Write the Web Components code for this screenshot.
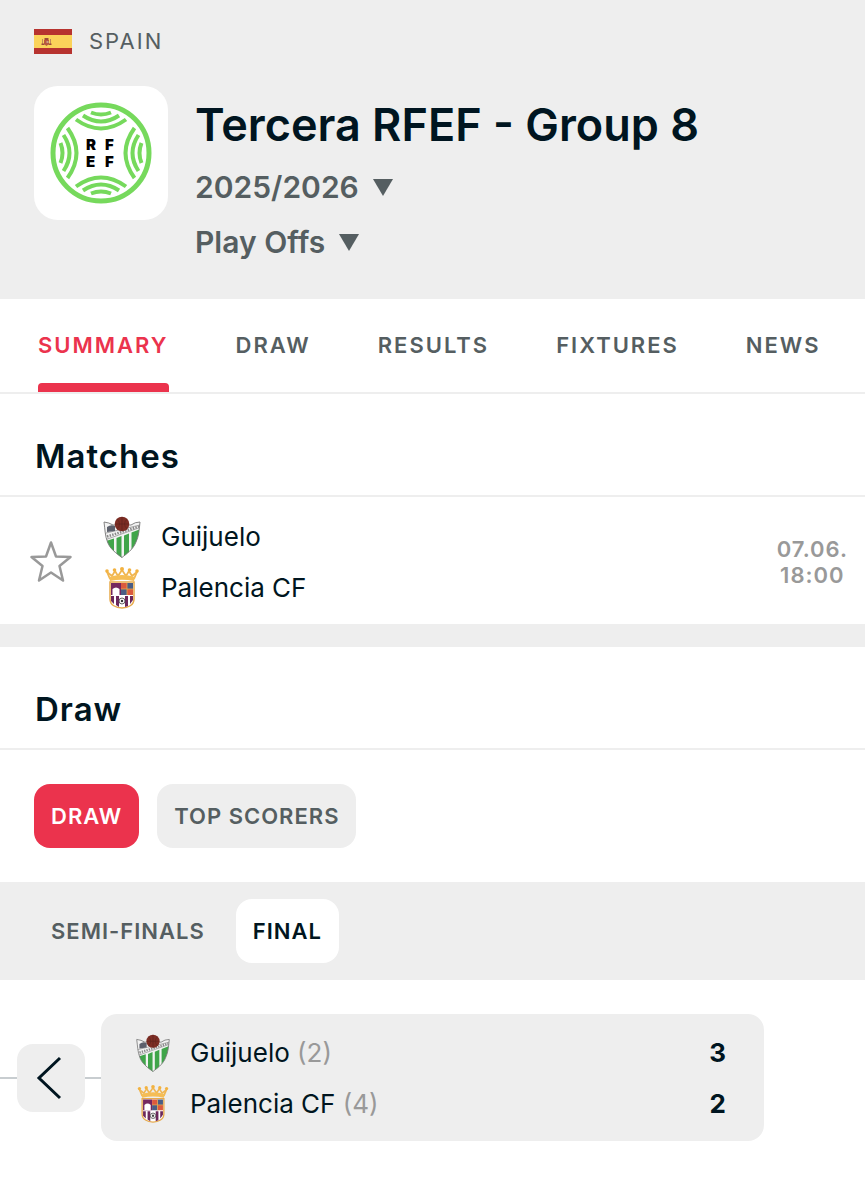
<!DOCTYPE html>
<html lang="en">
<head>
<meta charset="utf-8">
<meta name="viewport" content="width=device-width, initial-scale=1">
<title>Tercera RFEF - Group 8</title>
<style>
:root { --dark:#001520; --muted:#555e61; --faint:#999; --red:#eb334d; --grey:#eee; }
body { margin:0; background:#fff; color:var(--dark); font-family:Inter,"Liberation Sans",sans-serif; font-size:26px; }
</style>
</head>
<body>
<league-page></league-page>
<script>
const define = (name, html) => {
  const template = document.createElement('template');
  template.innerHTML = html;
  customElements.define(name, class extends HTMLElement {
    constructor() {
      super();
      this.attachShadow({ mode: 'open' }).append(template.content.cloneNode(true));
    }
  });
};

define('flag-spain', `
<style>:host{display:block;width:38px;height:25px}svg{display:block}</style>
<svg width="38" height="25" viewBox="0 0 38 25" aria-label="Spain">
  <path fill="#b7332f" d="M0 0h38v25H0z"/><path fill="#fbd35a" d="M0 6h38v13H0z"/>
  <path fill="#c08a5a" d="M8 10h1v6H8zM16 10h1v6h-1z"/><path fill="#b9583f" d="M10 11h5v4l-2.500 2-2.500-2z"/><path fill="#9d4a3a" d="M10.500 9h4v2h-4zM7.500 14.500h3V16h-3zM14.500 14.500h3V16h-3z"/>
  <path fill="#c9a08a" d="M12.500 12h2v2h-2z"/>
</svg>`);

define('league-logo', `
<style>:host{display:block;flex:none;width:134px;height:134px;border-radius:24px;background:#fff}svg{display:block}text{font:900 15px Inter,sans-serif}</style>
<svg width="134" height="134" viewBox="0 0 134 134" aria-label="RFEF">
  <defs><g id="arcs"><path d="M42 33.500Q67 51.500 92 33.500"/><path d="M49 29.500Q67 41.500 85 29.500"/><path d="M57 26.500Q67 30.500 77 26.500"/></g></defs>
  <g fill="none" stroke="#76d95c" stroke-width="4">
    <circle cx="67" cy="67" r="48" stroke-width="5"/>
    <use href="#arcs"/><use href="#arcs" transform="rotate(90 67 67)"/><use href="#arcs" transform="rotate(180 67 67)"/><use href="#arcs" transform="rotate(270 67 67)"/>
  </g>
  <text x="52 71" y="64">RF</text><text x="52 71" y="81">EF</text>
</svg>`);

define('crest-guijuelo', `
<style>:host{display:block;width:var(--crest,42px);height:var(--crest,42px)}svg{display:block;width:100%;height:100%}</style>
<svg viewBox="0 0 42 42" aria-hidden="true">
  <defs><clipPath id="shield"><path d="M3 6q5 .5 9 3h18q4-3 9-3c-.8 7-1 14-4 20-3 8-10 12-14 16C15 37 9 33 6.500 26 4 20 4 13 3 6z"/></clipPath></defs>
  <g clip-path="url(#shield)">
    <path fill="#f3f3f3" d="M0 0h42v42H0z"/>
    <path fill="#40a54a" d="M5 25l8-2.500V42H5zM15.500 22l5-2v22h-5zM23 19.500l5-2V42h-5zM30.500 16.500l9-3.500v29h-9z"/>
    <path fill="none" stroke="#888" stroke-width=".7" d="M3 17.500L39 9M5 23.500l34-12"/>
    <path fill="none" stroke="#8a8a8a" stroke-width="2.500" stroke-dasharray="1.500 1.200" d="M6 20.500l32-10"/>
    <path fill="#5c606c" d="M6 14v-3q4-3 8-1v5l-8 1z"/>
  </g>
  <path fill="none" stroke="#777" stroke-width=".9" d="M3 6q5 .5 9 3h18q4-3 9-3c-.8 7-1 14-4 20-3 8-10 12-14 15.500C15 37 9 33 6.500 26 4 20 4 13 3 6z"/>
  <circle cx="21" cy="8" r="7.300" fill="#7d2d24"/><path fill="none" stroke="#5e241c" stroke-width=".7" d="M14 8h14M21 1v14M16 3q5 5 0 10M26 3q-5 5 0 10"/>
</svg>`);

define('crest-palencia', `
<style>:host{display:block;width:var(--crest,42px);height:var(--crest,42px)}svg{display:block;width:100%;height:100%}</style>
<svg viewBox="0 0 42 42" aria-hidden="true">
  <g fill="none" stroke="#f0b652" stroke-width="1.800" stroke-linejoin="round"><path d="M9 12L6 5l5 4 3-5 3 5 4-6 4 6 3-5 3 5 5-4-3 7"/></g>
  <path fill="#f5bd55" d="M8 10q13-4 26 0l-1 4q-12-2.500-24 0z"/>
  <g fill="#f2b240"><circle cx="6" cy="4" r="1.800"/><circle cx="13.500" cy="3" r="1.800"/><circle cx="21" cy="2" r="2"/><circle cx="28.500" cy="3" r="1.800"/><circle cx="36" cy="4" r="1.800"/></g>
  <path fill="#fff" stroke="#e7aa4b" stroke-width="1.500" d="M9 15h24v17c0 6-6 9-12 9S9 38 9 32z"/>
  <path fill="#75285f" d="M10 16h10v12H10z"/><path fill="#fff" d="M11.500 28v-6q3.500-3 7 0v6z"/>
  <path fill="#db5a3e" d="M20 16h6v6h-6zM26 22h6v6h-6z"/><path fill="#4a5d85" d="M26 16h6v6h-6zM20 22h6v6h-6z"/>
  <path fill="none" stroke="#e7aa4b" stroke-width=".8" d="M26 16v12M20 22h12"/>
  <path fill="#6b285c" d="M10 29h3v8l-3-3zM15 29h3v11l-3-2zM24 29h3v10l-3 1zM29 29h3v4l-3 4z"/>
  <circle cx="21" cy="34" r="3" fill="#eee" stroke="#444" stroke-width=".8"/><path fill="#333" d="M20 33h2v2h-2z"/>
</svg>`);

define('pick-list', `
<style>
:host{display:block}
label{display:flex;align-items:center;gap:14px;color:var(--muted)}
svg{display:block}
select{appearance:none;border:0;margin:0;padding:0;background:none;color:inherit;font:600 30px/36px Inter,sans-serif;field-sizing:content;cursor:pointer}
</style>
<label><select></select><svg width="20" height="17" aria-hidden="true"><path fill="currentColor" d="M0 0h20L10 17z"/></svg></label>`);

define('league-header', `
<style>
:host{display:block;background:var(--grey);padding:26px 34px 39px}
.country{display:flex;align-items:center;gap:17px;height:30px;margin-bottom:30px}
a{color:var(--muted);font-size:22px;line-height:30px;letter-spacing:2px;text-decoration:none}
.main{display:flex;gap:27px}
h1{margin:11px 0 16px;font-size:45px;font-weight:600;line-height:56px}
.lists{display:grid;gap:19px}
</style>
<div class="country"><flag-spain></flag-spain><a href="#spain">SPAIN</a></div>
<div class="main"><league-logo></league-logo><div><h1>Tercera RFEF - Group 8</h1>
<div class="lists"><pick-list data-label="Season" data-value="2025/2026"></pick-list><pick-list data-label="Stage" data-value="Play Offs"></pick-list></div></div></div>`);

define('league-tabs', `
<style>
:host{display:block;border-bottom:2px solid var(--grey);overflow:hidden}
nav{display:flex;gap:67px;padding:0 38px}
a{position:relative;flex:none;color:var(--muted);font-size:22px;font-weight:600;line-height:93px;letter-spacing:2px;text-decoration:none}
a[aria-current]{color:var(--red)}
a[aria-current]::after{content:"";position:absolute;inset:auto 0 0;height:9px;border-radius:4px 4px 0 0;background:var(--red)}
</style>
<nav><a href="#summary" aria-current="page">SUMMARY</a><a href="#draw">DRAW</a><a href="#results">RESULTS</a><a href="#fixtures">FIXTURES</a><a href="#news">NEWS</a></nav>`);

define('section-title', `
<style>:host{display:block;padding:38px 35px 15px;border-bottom:2px solid var(--grey)}h2{margin:0;font-size:33px;font-weight:600;line-height:48px;letter-spacing:1px}</style>
<h2><slot></slot></h2>`);

define('team-line', `
<style>
:host{display:flex;align-items:center;height:51px;gap:18px}
.name{flex:1;line-height:32px}
::slotted(small){font-size:26px;color:var(--faint)}
::slotted(b){font-weight:700}
</style>
<slot name="crest"></slot><span class="name"><slot></slot></span><slot name="score"></slot>`);

define('match-row', `
<style>
:host{display:flex;align-items:center;padding:14px 17px 11px 30px;border-bottom:23px solid var(--grey)}
button{flex:none;border:0;padding:0;background:none;width:42px;height:42px;margin-right:29px;cursor:pointer}
svg{display:block}
.teams{flex:1}
time{flex:none;text-align:center;font-size:22px;line-height:26px;font-weight:600;letter-spacing:1px;color:var(--faint)}
</style>
<button aria-label="Add to favourites"><svg width="42" height="42" viewBox="0 0 42 42"><path fill="none" stroke="#999" stroke-width="2.500" stroke-linejoin="round" d="M21 1.500l5 14 14.500.500-11 9 3.500 14.500-12-8-12 8L12.500 25 1.500 16l14.500-.5z"/></svg></button>
<div class="teams"><team-line><crest-guijuelo slot="crest"></crest-guijuelo>Guijuelo</team-line><team-line><crest-palencia slot="crest"></crest-palencia>Palencia CF</team-line></div>
<time>07.06.<br>18:00</time>`);

define('pill-button', `
<style>
:host{display:block}
button{border:0;border-radius:16px;height:64px;padding:0 17px;background:var(--pill,transparent);color:var(--pill-ink,var(--muted));font:600 22px/28px Inter,sans-serif;letter-spacing:1px;cursor:pointer}
</style>
<button><slot></slot></button>`);

define('draw-filters', `
<style>
:host{display:block}
div{display:flex;padding:34px;gap:18px}
.rounds{padding:17px 34px;gap:14px;background:var(--grey)}
.red{--pill:var(--red);--pill-ink:#fff}.grey{--pill:var(--grey)}.white{--pill:#fff;--pill-ink:var(--dark)}
</style>
<div><pill-button class="red">DRAW</pill-button><pill-button class="grey">TOP SCORERS</pill-button></div>
<div class="rounds"><pill-button>SEMI-FINALS</pill-button><pill-button class="white">FINAL</pill-button></div>`);

define('draw-bracket', `
<style>
:host{display:flex;align-items:center;padding:34px 101px 60px 0}
i{flex:none;width:17px;height:2px;background:#c8cdd0}
i+button+i{width:16px}
button{flex:none;border:0;border-radius:16px;width:68px;height:68px;padding:0;background:var(--grey);color:var(--dark);cursor:pointer}
svg{display:block;margin:auto}
.card{flex:1;background:var(--grey);border-radius:16px;padding:13px 38px 12px 33px;--crest:38px}
</style>
<i></i><button aria-label="Previous round"><svg width="68" height="68"><path fill="none" stroke="currentColor" stroke-width="3" d="M43 14L22 34l21 20"/></svg></button><i></i>
<div class="card">
<team-line><crest-guijuelo slot="crest"></crest-guijuelo>Guijuelo <small>(2)</small><b slot="score">3</b></team-line>
<team-line><crest-palencia slot="crest"></crest-palencia>Palencia CF <small>(4)</small><b slot="score">2</b></team-line>
</div>`);

define('league-page', `
<style>:host{display:block}</style>
<league-header></league-header><main><league-tabs></league-tabs><section-title>Matches</section-title><match-row></match-row>
<section-title>Draw</section-title><draw-filters></draw-filters><draw-bracket></draw-bracket></main>`);

const header = document.querySelector('league-page').shadowRoot.querySelector('league-header');
header.shadowRoot.querySelectorAll('pick-list').forEach(list => {
  const select = list.shadowRoot.querySelector('select');
  select.setAttribute('aria-label', list.dataset.label);
  select.add(new Option(list.dataset.value));
});
</script>
</body>
</html>
